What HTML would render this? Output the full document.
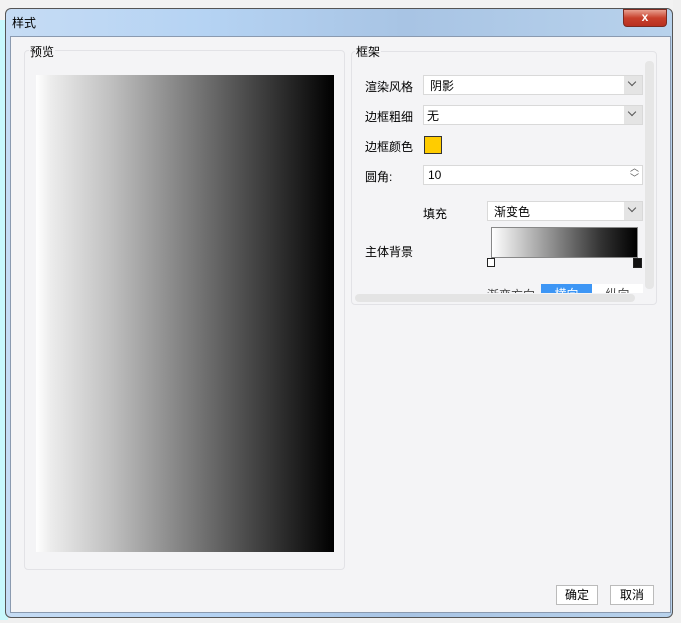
<!DOCTYPE html>
<html><head><meta charset="utf-8"><style>
body{margin:0;width:681px;height:623px;background:#f0f0f0;position:relative;overflow:hidden;font-family:"Liberation Sans","Noto Sans CJK SC",sans-serif;font-size:12px;color:#000}
.a{position:absolute}
.lbl{position:absolute;font-size:12px}
.sel{position:absolute;background:#fff;border:1px solid #d9d9d9;height:18px;box-sizing:border-box}
.sel span{position:absolute;left:6px;top:1px;font-size:12px}
.sel i{position:absolute;right:0;top:0;width:18px;height:16px;background:#e4e4e4}
.sel i:after{content:"";position:absolute;left:5px;top:3px;width:5px;height:5px;border-right:1px solid #555;border-bottom:1px solid #555;transform:rotate(45deg)}
</style></head><body>
<div class="a" style="left:0;top:0;width:681px;height:20px;background:#f2f2f2"></div>
<div class="a" style="left:0;top:20px;width:8px;height:600px;background:#c8f8fc"></div>
<div class="a" style="left:673px;top:0;width:8px;height:623px;background:#f0f0f0"></div>
<!-- window -->
<div class="a" style="left:5px;top:8px;width:668px;height:610px;border:1px solid #555;border-radius:6px;background:linear-gradient(90deg,#c6dcf4,#b5d3f3 30%,#a8c4e4 60%,#b8d2ec);box-sizing:border-box"></div>
<div class="lbl" style="left:12px;top:14px">样式</div>
<div class="a" style="left:623px;top:9px;width:44px;height:18px;border-radius:0 0 4px 4px;background:linear-gradient(#e8a090,#c8402c 50%,#b83020);border:1px solid #7a2a20;box-sizing:border-box;color:#fff;font-weight:bold;text-align:center;line-height:15px;font-size:12px">x</div>
<div class="a" style="left:10px;top:36px;width:661px;height:577px;background:#f4f4f6;border:1px solid #8a9ab0;box-sizing:border-box"></div>
<!-- preview -->
<div class="a" style="left:24px;top:50px;width:321px;height:520px;border:1px solid #e2e2e6;border-radius:4px;box-sizing:border-box"></div>
<div class="lbl" style="left:29px;top:43px;background:#f4f4f6;padding:0 1px">预览</div>
<div class="a" style="left:36px;top:75px;width:298px;height:477px;background:linear-gradient(90deg,#fff,#ececec 5%,#c0c0c0 25%,#808080 50%,#404040 75%,#000)"></div>
<!-- frame group -->
<div class="a" style="left:351px;top:51px;width:306px;height:254px;border:1px solid #e2e2e6;border-radius:4px;box-sizing:border-box"></div>
<div class="lbl" style="left:355px;top:43px;background:#f4f4f6;padding:0 1px">框架</div>
<div class="a" style="left:645px;top:61px;width:9px;height:228px;background:#e6e6e6;border-radius:4px"></div>
<div class="a" style="left:355px;top:294px;width:280px;height:8px;background:#e4e4e4;border-radius:4px"></div>
<div class="lbl" style="left:365px;top:78px">渲染风格</div>
<div class="sel" style="left:423px;top:75px;width:220px;height:20px"><span>阴影</span><i style="height:18px"></i></div>
<div class="lbl" style="left:365px;top:108px">边框粗细</div>
<div class="sel" style="left:423px;top:105px;width:220px;height:20px"><span style="left:3px">无</span><i style="height:18px"></i></div>
<div class="lbl" style="left:365px;top:138px">边框颜色</div>
<div class="a" style="left:424px;top:136px;width:18px;height:18px;background:#ffcc00;border:1px solid #333;box-sizing:border-box"></div>
<div class="lbl" style="left:365px;top:168px">圆角:</div>
<div class="sel" style="left:423px;top:165px;width:220px;height:20px"><span style="left:4px;top:2px">10</span></div>
<div class="lbl" style="left:630px;top:163px;font-size:9px;color:#555;line-height:10px">︿<br>﹀</div>
<div class="lbl" style="left:423px;top:205px">填充</div>
<div class="sel" style="left:487px;top:201px;width:156px;height:20px"><span>渐变色</span><i style="height:18px"></i></div>
<div class="lbl" style="left:365px;top:243px">主体背景</div>
<div class="a" style="left:491px;top:227px;width:147px;height:31px;border:1px solid #888;box-sizing:border-box;background:linear-gradient(90deg,#fff,#bbb 25%,#777 50%,#333 75%,#000)"></div>
<div class="a" style="left:487px;top:258px;width:8px;height:9px;border:1px solid #222;background:#fff;box-sizing:border-box"></div>
<div class="a" style="left:633px;top:258px;width:9px;height:10px;border:1px solid #222;background:#111;box-sizing:border-box"></div>
<div class="a" style="left:487px;top:285px;width:52px;height:8px;overflow:hidden"><div style="font-size:12px;color:#444;margin-top:1px">渐变方向</div></div>
<div class="a" style="left:541px;top:284px;width:51px;height:9px;background:#3d96f5;overflow:hidden;color:#fff;text-align:center;font-size:12px;line-height:20px">横向</div>
<div class="a" style="left:592px;top:284px;width:51px;height:9px;background:#fff;overflow:hidden;color:#444;text-align:center;font-size:12px;line-height:20px">纵向</div>
<!-- buttons -->
<div class="a" style="left:556px;top:585px;width:42px;height:20px;border:1px solid #bbb;background:#fff;box-sizing:border-box;text-align:center;line-height:19px">确定</div>
<div class="a" style="left:610px;top:585px;width:44px;height:20px;border:1px solid #bbb;background:#fff;box-sizing:border-box;text-align:center;line-height:19px">取消</div>
</body></html>
